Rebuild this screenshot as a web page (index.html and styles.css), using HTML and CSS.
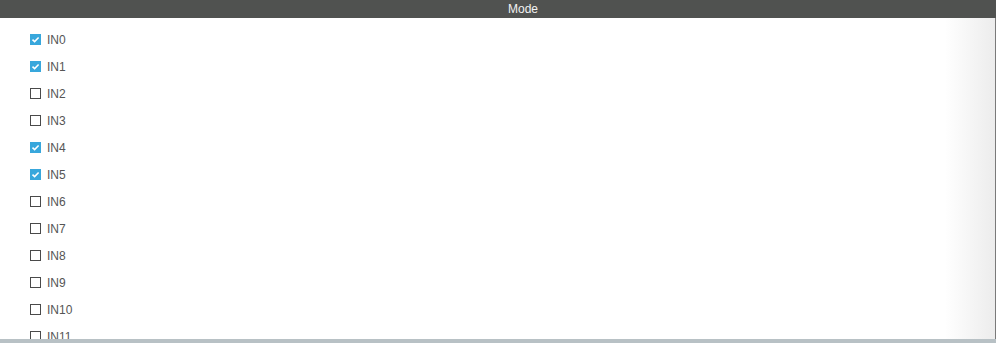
FILE: index.html
```html
<!DOCTYPE html>
<html lang="en">
<head>
  <meta charset="UTF-8">
  <title>Mode</title>
  <link rel="stylesheet" href="styles.css">
</head>
<body>

  <div class="header">Mode</div>

  <div class="panel">
    <ul class="inputs">
      <li><span class="box checked"><svg viewBox="0 0 11 11"><path d="M2.5 5.6 L4.6 7.6 L8.6 3.4" /></svg></span>IN0</li>
      <li><span class="box checked"><svg viewBox="0 0 11 11"><path d="M2.5 5.6 L4.6 7.6 L8.6 3.4" /></svg></span>IN1</li>
      <li><span class="box"></span>IN2</li>
      <li><span class="box"></span>IN3</li>
      <li><span class="box checked"><svg viewBox="0 0 11 11"><path d="M2.5 5.6 L4.6 7.6 L8.6 3.4" /></svg></span>IN4</li>
      <li><span class="box checked"><svg viewBox="0 0 11 11"><path d="M2.5 5.6 L4.6 7.6 L8.6 3.4" /></svg></span>IN5</li>
      <li><span class="box"></span>IN6</li>
      <li><span class="box"></span>IN7</li>
      <li><span class="box"></span>IN8</li>
      <li><span class="box"></span>IN9</li>
      <li><span class="box"></span>IN10</li>
      <li><span class="box"></span>IN11</li>
    </ul>
  </div>

  <div class="footer"></div>

</body>
</html>
```

FILE: styles.css
```css
html, body {
  margin: 0;
  padding: 0;
}
body {
  font-family: "Liberation Sans", Arial, sans-serif;
  width: 996px;
  height: 343px;
  overflow: hidden;
  background-color: #ffffff;
}
.header {
  height: 18px;
  line-height: 18px;
  background-color: #505250;
  color: #f2f2f2;
  font-size: 12px;
  text-align: center;
  padding-left: 50px;
}
.panel {
  height: 321px;
  overflow: hidden;
  background: linear-gradient(to right, #ffffff 0, #ffffff 945px, #ececec 995px, #7a7a7a 995px);
}
.inputs {
  list-style: none;
  margin: 0;
  padding: 8px 0 0 30px;
}
.inputs li {
  display: flex;
  align-items: center;
  height: 27px;
  font-size: 12px;
  color: #555555;
}
.box {
  box-sizing: border-box;
  width: 11px;
  height: 11px;
  margin-right: 6px;
  border: 1px solid #4a4a4a;
  background-color: #ffffff;
}
.box.checked {
  border: none;
  background-color: #38a7dc;
}
.box svg {
  display: block;
  width: 11px;
  height: 11px;
}
.box svg path {
  fill: none;
  stroke: #ffffff;
  stroke-width: 1.5;
}
.footer {
  height: 4px;
  background-color: #b8c1c5;
}
```
